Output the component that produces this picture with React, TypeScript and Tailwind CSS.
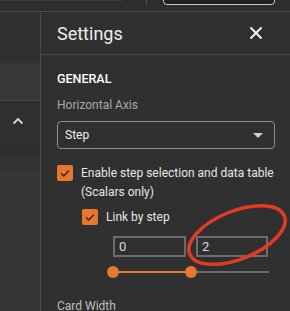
import React from 'react';

const font = { fontFamily: 'Roboto, "Noto Sans", sans-serif' };

const Check = () => (
  <span className="flex h-[16px] w-[16px] shrink-0 items-center justify-center rounded-[2px] bg-[#e8762c]">
    <svg width="12" height="12" viewBox="0 0 12 12">
      <path d="M2 6.2 L4.7 8.9 L10 3.4" fill="none" stroke="#2b2b2b" strokeWidth="1.4" />
    </svg>
  </span>
);

const App: React.FC = () => {
  return (
    <div className="relative h-[311px] w-[290px] overflow-hidden bg-[#303030] text-[#ececec]" style={font}>
      {/* top toolbar strip */}
      <div className="relative h-[12px] border-b border-[#4a4a4a] bg-[#2d2d2d]">
        <div className="absolute left-0 top-0 h-[1px] w-[122px] bg-[#3c3c3c]" />
        <div className="absolute left-[146px] top-0 h-[5px] w-[1px] bg-[#555]" />
        <div className="absolute left-[163px] top-[-6px] h-[11px] w-[112px] rounded-[4px] border border-[#c8c8c8] bg-[#1f1f1f]" />
      </div>

      <div className="flex h-[299px]">
        {/* left sidebar */}
        <div className="flex w-[41px] shrink-0 flex-col border-r border-[#4a4a4a] bg-[#2f2f2f]">
          <div className="h-[43px]" />
          <div className="h-[46px] border-b border-[#474747] bg-gradient-to-b from-[#2c2c2c] to-[#373737] to-[25%]" />
          <div className="flex h-[42px] items-center justify-center pb-[2px] pr-[4px]">
            <svg width="12" height="8" viewBox="0 0 12 8">
              <path d="M1.5 6.5 L6 2 L10.5 6.5" fill="none" stroke="#d6d6d6" strokeWidth="1.8" />
            </svg>
          </div>
          <div className="flex-1 bg-gradient-to-b from-[#2b2b2b] to-[#363636] to-[20%]" />
        </div>

        {/* settings panel */}
        <div className="min-w-0 flex-1">
          <div className="flex h-[43px] items-center justify-between border-b border-[#4a4a4a] pl-[16px] pr-[27px]">
            <span className="text-[18px] text-[#ededed]">Settings</span>
            <svg width="14" height="14" viewBox="0 0 14 14">
              <path d="M1.5 1.5 L12.5 12.5 M12.5 1.5 L1.5 12.5" stroke="#f2f2f2" strokeWidth="2" />
            </svg>
          </div>

          <div className="pl-[16px] pr-[16px]">
            <div className="mt-[16px] text-[12.5px] font-medium leading-[16px] text-white">GENERAL</div>
            <div className="mt-[10px] text-[12px] leading-[16px] text-[#a8a8a8]">Horizontal Axis</div>
            <div className="mt-[8px] flex h-[28px] w-[218px] items-center justify-between rounded-[4px] border border-[#8a9098] pl-[7px] pr-[11px]">
              <span className="text-[12px] text-[#f0f0f0]">Step</span>
              <svg width="10" height="5" viewBox="0 0 10 5">
                <path d="M0 0 L10 0 L5 5 Z" fill="#cfcfcf" />
              </svg>
            </div>

            <div className="mt-[16px] flex gap-[8px]">
              <Check />
              <div className="-mt-[1px] whitespace-nowrap text-[12px] leading-[19px] text-[#e6e6e6]">
                Enable step selection and data table
                <br />
                (Scalars only)
              </div>
            </div>

            <div className="ml-[25px] mt-[6px] flex items-center gap-[8px]">
              <Check />
              <span className="text-[12px] text-[#e6e6e6]">Link by step</span>
            </div>

            <div className="ml-[56px] mt-[10px] flex gap-[10px]">
              <div className="flex h-[21px] w-[73px] items-center border-2 border-[#6c6c6c] pl-[4px] text-[13px] text-[#d8d8d8]">0</div>
              <div className="flex h-[21px] w-[72px] items-center border-2 border-[#6c6c6c] pl-[4px] text-[13px] text-[#d8d8d8]">2</div>
            </div>

            <div className="relative ml-[50px] mt-[9px] h-[12px] w-[162px]">
              <div className="absolute left-[6px] top-[5px] h-[2px] w-[78px] bg-[#e8762c]" />
              <div className="absolute left-[84px] top-[5px] h-[2px] w-[78px] bg-[#6a6a6a]" />
              <div className="absolute left-0 top-0 h-[12px] w-[12px] rounded-full bg-[#e8762c]" />
              <div className="absolute left-[78px] top-0 h-[12px] w-[12px] rounded-full bg-[#e8762c]" />
            </div>

            <div className="mt-[20px] text-[12px] leading-[16px] text-[#bdbdbd]">Card Width</div>
          </div>
        </div>
      </div>

      {/* red annotation circle */}
      <svg className="pointer-events-none absolute left-0 top-0" width="290" height="311" viewBox="0 0 290 311">
        <ellipse cx="237" cy="235" rx="51" ry="24" transform="rotate(-22 237 235)" fill="none" stroke="#e23b22" strokeWidth="3.5" />
      </svg>
    </div>
  );
};

export default App;
